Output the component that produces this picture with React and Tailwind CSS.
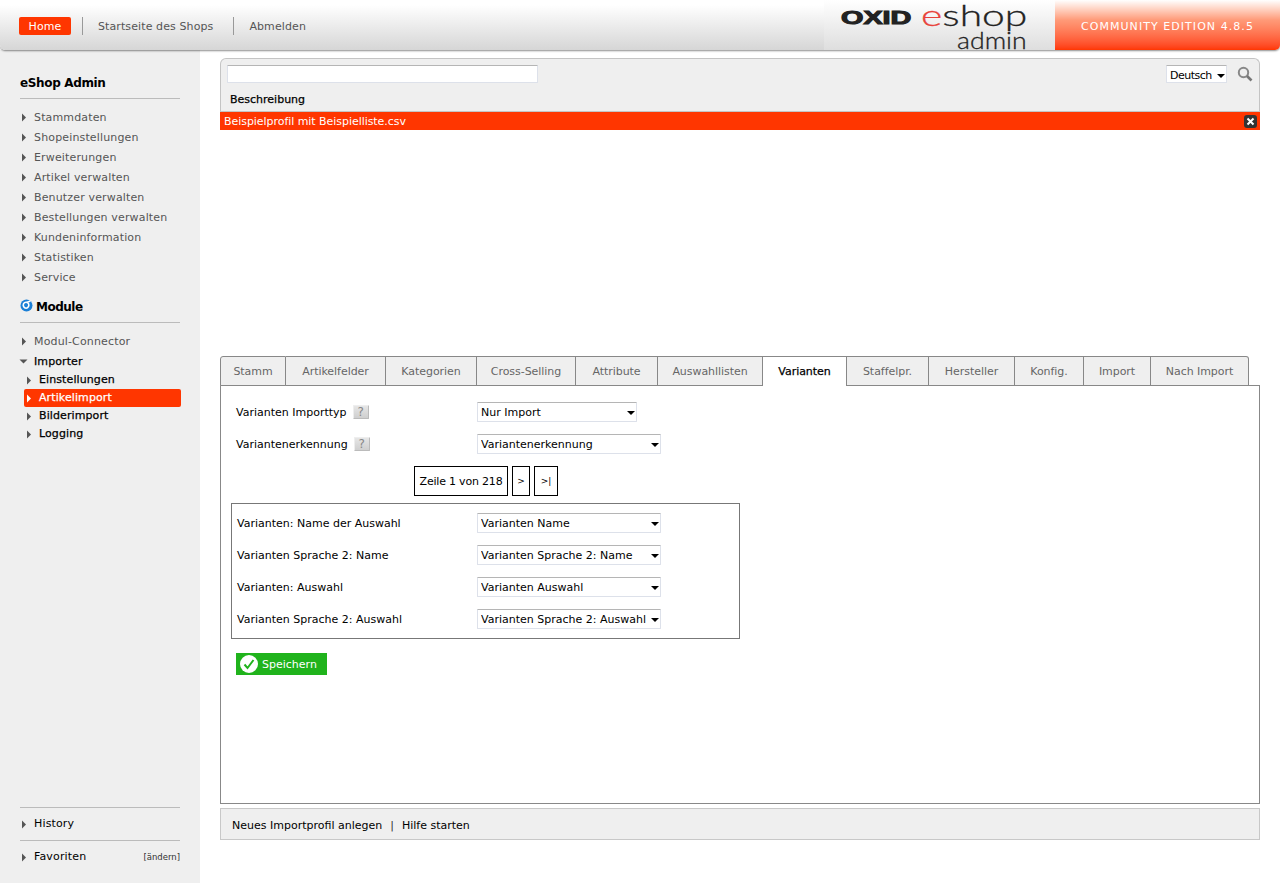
import React from "react";

function Tri({ down, white }) {
  const fill = white ? "#ffffff" : "#555555";
  return down ? (
    <svg width="9" height="9" viewBox="0 0 9 9" className="shrink-0">
      <path d="M0.500 2.500h8L4.500 6.500z" fill={fill} />
    </svg>
  ) : (
    <svg width="9" height="9" viewBox="0 0 9 9" className="shrink-0">
      <path d="M3 0.500v8l4-4z" fill={fill} />
    </svg>
  );
}

function NavItem({ children }) {
  return (
    <div className="flex items-center h-5 text-[#555] tracking-[0.15px]">
      <span className="w-[14px] -ml-[1px] mr-[1px] flex items-center"><Tri /></span>
      <span>{children}</span>
    </div>
  );
}

function SubItem({ children, active }) {
  return (
    <div className={"flex items-center h-[18px] w-[157px] ml-[4px] rounded-[2px] [-webkit-text-stroke:0.25px] tracking-[0.1px] " + (active ? "bg-[#ff3600] text-white" : "text-black")}>
      <span className="w-[15px] flex items-center"><Tri white={active} /></span>
      <span className="pb-[2px]">{children}</span>
    </div>
  );
}

function Sel({ w, value, cls = "" }) {
  return (
    <div className={"relative h-5 bg-white border border-[#dde1ea] border-t-[#b5b5b5] rounded-[1px] " + w}>
      <select defaultValue={value} className={"appearance-none w-full h-full pl-[3px] pr-[8px] pt-[1px] text-black bg-transparent outline-none leading-none " + cls}>
        <option>{value}</option>
      </select>
      <svg width="8" height="4" viewBox="0 0 8 4" className="absolute right-[1.500px] top-[7.500px] pointer-events-none">
        <path d="M0 0h8L4 4z" fill="#000" />
      </svg>
    </div>
  );
}

function Help() {
  return (
    <span className="inline-flex items-center justify-center w-4 h-[14px] bg-gradient-to-b from-[#e6e6e6] to-[#cfcfcf] border border-[#eeeeee] border-b-[#bbb] border-r-[#bbb] text-[#888] text-[12px] leading-none rounded-[1px]">?</span>
  );
}

const tabs = [
  ["Stamm", "w-[66px]"],
  ["Artikelfelder", "w-[100px]"],
  ["Kategorien", "w-[91px]"],
  ["Cross-Selling", "w-[99px]"],
  ["Attribute", "w-[82px]"],
  ["Auswahllisten", "w-[105px]"],
  ["Varianten", "w-[84px]", true],
  ["Staffelpr.", "w-[82px]"],
  ["Hersteller", "w-[86px]"],
  ["Konfig.", "w-[69px]"],
  ["Import", "w-[67px]"],
  ["Nach Import", "w-[98px]"],
];

const boxRows = [
  ["Varianten: Name der Auswahl", "Varianten Name"],
  ["Varianten Sprache 2: Name", "Varianten Sprache 2: Name"],
  ["Varianten: Auswahl", "Varianten Auswahl"],
  ["Varianten Sprache 2: Auswahl", "Varianten Sprache 2: Auswahl"],
];

export default function App() {
  return (
    <div className="relative w-[1280px] h-[883px] bg-white overflow-hidden text-[11px] leading-none text-black" style={{ fontFamily: '"DejaVu Sans", Verdana, sans-serif' }}>
      {/* top bar */}
      <header className="relative z-10 flex h-[50px] w-full rounded-b-[5px] shadow-[0_1px_2px_rgba(0,0,0,0.45)] bg-gradient-to-b from-white from-10% to-[#d6d6d6]">
        <nav className="flex-1 flex items-center pl-[19px] h-[50px] text-[#555] tracking-[0.1px]">
          <span className="flex items-center justify-center w-[52px] h-[18px] mt-[2px] pt-[1px] bg-[#ff3600] text-white rounded-[2px]">Home</span>
          <span className="ml-[11px] w-px h-[18px] mt-[2px] bg-[#999]" />
          <span className="ml-[15px] pt-[2px]">Startseite des Shops</span>
          <span className="ml-[20px] w-px h-[18px] mt-[2px] bg-[#999]" />
          <span className="ml-[15px] pt-[2px]">Abmelden</span>
        </nav>
        <div className="relative w-[231px] h-[50px] bg-gradient-to-b from-white to-[#dedede]">
          <span className="absolute left-[17px] top-[9px] text-[18px] leading-[18px] font-bold text-[#222] scale-x-[1.6] origin-left [-webkit-text-stroke:1px_#222]" style={{ fontFamily: '"Liberation Sans", sans-serif' }}>OXID</span>
          <span className="absolute left-[97px] top-[4px] text-[30px] leading-[20px] font-light text-[#222] scale-x-[1.36] origin-left [-webkit-text-stroke:0.3px]" style={{ fontFamily: 'Lato, sans-serif' }}><span className="text-[#e8423a]">e</span>shop</span>
          <span className="absolute right-[28px] top-[30px] text-[24px] leading-[20px] font-light text-[#222] scale-x-[1.11] origin-right [-webkit-text-stroke:0.3px]" style={{ fontFamily: 'Lato, sans-serif' }}>admin</span>
        </div>
        <div className="w-[225px] h-[50px] flex items-center pl-[26px] pt-[2px] rounded-br-[5px] bg-gradient-to-b from-white via-[#ff9a78] via-40% to-[#ff3600] text-white tracking-[1.05px]">
          COMMUNITY EDITION 4.8.5
        </div>
      </header>

      <div className="flex h-[833px]">
        {/* sidebar */}
        <aside className="w-[200px] shrink-0 bg-[#efefef] px-[20px] flex flex-col">
          <h2 className="mt-[25px] text-[12px] font-bold tracking-[-0.35px] h-[15px] flex items-center">eShop Admin</h2>
          <div className="mt-[8px] h-px bg-[#bbb]" />
          <div className="mt-[8px]">
            {["Stammdaten","Shopeinstellungen","Erweiterungen","Artikel verwalten","Benutzer verwalten","Bestellungen verwalten","Kundeninformation","Statistiken","Service"].map((t) => (
              <NavItem key={t}>{t}</NavItem>
            ))}
          </div>
          <div className="mt-[12px] flex items-center h-4 text-[12px] font-bold tracking-[-0.5px]">
            <svg width="13" height="13" viewBox="0 0 13 13" className="shrink-0 -mt-[3px] mr-[3px]">
              <circle cx="6.500" cy="6.500" r="6" fill="#1a7fd6" />
              <path d="M6 3.200a2.800 3 0 1 0 .1 0" fill="none" stroke="#fff" strokeWidth="1.600" />
              <path d="M6.500 3.500l4-1.500" stroke="#fff" strokeWidth="1.600" />
            </svg>
            Module
          </div>
          <div className="mt-[7px] h-px bg-[#bbb]" />
          <div className="mt-[8px]">
            <NavItem>Modul-Connector</NavItem>
            <div className="flex items-center h-5 text-black [-webkit-text-stroke:0.25px] tracking-[0.1px]">
              <span className="w-[14px] flex items-center -ml-[1px] mr-[1px]"><Tri down /></span>
              <span>Importer</span>
            </div>
            <div>
              <SubItem>Einstellungen</SubItem>
              <SubItem active>Artikelimport</SubItem>
              <SubItem>Bilderimport</SubItem>
              <SubItem>Logging</SubItem>
            </div>
          </div>
          <div className="mt-auto mb-[10px]">
            <div className="h-px bg-[#bbb]" />
            <div className="flex items-center h-[32px] text-black tracking-[0.15px]">
              <span className="w-[14px] -ml-[1px] mr-[1px] flex items-center"><Tri /></span><span className="pb-[2px]">History</span>
            </div>
            <div className="h-px bg-[#bbb]" />
            <div className="flex items-center h-[32px] text-black tracking-[0.15px]">
              <span className="w-[14px] -ml-[1px] mr-[1px] flex items-center"><Tri /></span><span className="pb-[2px]">Favoriten</span>
              <span className="ml-auto text-[8.500px] text-[#333] tracking-normal">[ändern]</span>
            </div>
          </div>
        </aside>

        {/* main */}
        <main className="w-[1040px] ml-[20px] pt-[8px]">
          <section className="h-[72px] bg-[#efefef] border-t border-x border-[#c4c4c4] rounded-t-[6px] relative flex flex-col">
            <div className="flex items-center h-[29px] pl-[6px] pr-[6px] pt-[1px]">
              <div className="w-[311px] h-[18px] bg-white border border-[#dde1ea] border-t-[#b5b5b5] rounded-[1px]" />
              <div className="ml-auto"><Sel w="w-[61px] h-[18px]" value="Deutsch" cls="tracking-[-0.5px] pt-[2px]" /></div>
              <svg width="16" height="16" viewBox="0 0 16 16" className="ml-[10px]">
                <circle cx="6.500" cy="6.500" r="4.700" fill="none" stroke="#888" strokeWidth="2" />
                <path d="M10 10l4.500 4.500" stroke="#777" strokeWidth="2.600" />
              </svg>
            </div>
            <div className="h-[24px] flex items-center pl-[9px] [-webkit-text-stroke:0.25px] border-b border-[#c4c4c4]">Beschreibung</div>
            <div className="-mx-px h-[18px] bg-[#ff3600] text-white flex items-center pl-[4px] pr-[3px]">
              <span className="pt-[1px] tracking-[-0.05px]">Beispielprofil mit Beispielliste.csv</span>
              <span className="ml-auto w-[13px] h-[13px] bg-[#333] rounded-[3px] flex items-center justify-center">
                <svg width="9" height="9" viewBox="0 0 9 9"><path d="M1.500 1.500l6 6M7.500 1.500l-6 6" stroke="#fff" strokeWidth="2" /></svg>
              </span>
            </div>
          </section>

          {/* tabs */}
          <div className="mt-[226px] flex h-[30px] relative z-10">
            {tabs.map(([t, w, active], i) => (
              <div key={t} className={"h-[30px] flex items-center justify-center border-t border-r border-[#888] tracking-[-0.05px] " + w + " " + (i === 0 ? "border-l rounded-tl-[3px] " : "") + (i === tabs.length - 1 ? "rounded-tr-[3px] " : "") + (active ? "bg-white text-black [-webkit-text-stroke:0.25px]" : "bg-[#efefef] text-[#666] border-b")}>
                {t}
              </div>
            ))}
          </div>

          <section className="-mt-px h-[419px] border border-[#888] px-[10px] pt-[16px]">
            <div className="flex items-center h-5 pl-[5px]">
              <span className="w-[241px] flex items-center gap-[6px]"><span>Varianten Importtyp</span> <Help /></span>
              <Sel w="w-[160px]" value="Nur Import" />
            </div>
            <div className="flex items-center h-5 pl-[5px] mt-[12px]">
              <span className="w-[241px] flex items-center gap-[6px]"><span>Variantenerkennung</span> <Help /></span>
              <Sel w="w-[184px]" value="Variantenerkennung" />
            </div>
            <div className="flex mt-[12px] ml-[183px] gap-[4px]">
              <span className="h-[30px] w-[94px] border border-black flex items-center justify-center tracking-[-0.2px]">Zeile 1 von 218</span>
              <span className="h-[30px] w-[18px] border border-black flex items-center justify-center text-[9px]">&gt;</span>
              <span className="h-[30px] w-[24px] border border-black flex items-center justify-center text-[9px]">&gt;|</span>
            </div>
            <div className="mt-[7px] w-[509px] h-[136px] border border-[#777] pl-[5px] pt-[9px] flex flex-col gap-[12px]">
              {boxRows.map(([l, v]) => (
                <div key={l} className="flex items-center h-5">
                  <span className="w-[240px] pt-[1px]">{l}</span>
                  <Sel w="w-[184px]" value={v} />
                </div>
              ))}
            </div>
            <button className="mt-[14px] ml-[5px] w-[91px] h-[22px] bg-[#20b31c] text-white flex items-center pl-[3px] gap-[3px]">
              <svg width="20" height="20" viewBox="0 0 20 20" className="shrink-0">
                <circle cx="10" cy="10" r="9" fill="#fff" />
                <path d="M5.500 10.500l3 3.500 6-8" fill="none" stroke="#20b31c" strokeWidth="2" />
              </svg>
              <span className="pt-[1px]">Speichern</span>
            </button>
          </section>

          <footer className="mt-[4px] h-[32px] bg-[#efefef] border border-[#c8c8c8] flex items-center pl-[11px] pt-[2px] text-black">
            Neues Importprofil anlegen
            <span className="mx-[8px] text-[#333]">|</span>
            Hilfe starten
          </footer>
        </main>
      </div>
    </div>
  );
}
